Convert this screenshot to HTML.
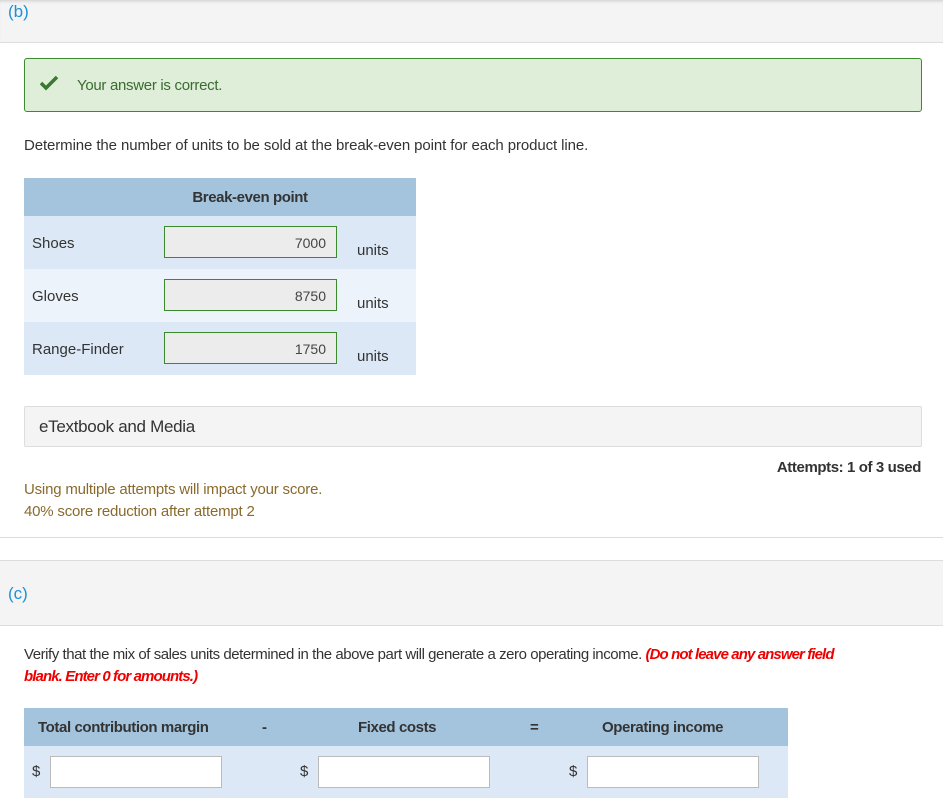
<!DOCTYPE html>
<html><head><style>
body{margin:0;width:943px;height:808px;overflow:hidden;background:#fff;font-family:"Liberation Sans",sans-serif;color:#333;font-size:15px;position:relative}
.a{position:absolute}
.inp{position:absolute;border:1px solid #3c8a2e;background:#ececec;height:32px;box-sizing:border-box;text-align:right;padding:8px 10px 0 0;font-size:14px;color:#444}
.inw{position:absolute;border:1px solid #bbb;background:#fff;height:32px;box-sizing:border-box;top:756px}
</style></head><body>
<div class="a" style="left:0;top:0;width:943px;height:42px;background:#f4f4f4;border-bottom:1px solid #ddd;box-shadow:inset 0 3px 3px -2px #ccc"></div>
<div class="a" style="left:8px;top:2px;color:#1e90d8;font-size:17px">(b)</div>
<div class="a" style="left:24px;top:58px;width:896px;height:52px;background:#dfeed9;border:1px solid #3c8a2e;border-radius:3px"></div>
<svg class="a" style="left:39px;top:75px" width="20" height="16" viewBox="0 0 20 16"><path d="M2 8 L7 13 L18 2" stroke="#3a7a30" stroke-width="3.5" fill="none"/></svg>
<div class="a" style="left:77px;top:77px;color:#3a6b30;font-size:15px;letter-spacing:-0.3px">Your answer is correct.</div>
<div class="a" style="left:24px;top:137px;font-size:15px;letter-spacing:-0.1px">Determine the number of units to be sold at the break-even point for each product line.</div>
<div class="a" style="left:24px;top:178px;width:392px;height:38px;background:#a4c4de"></div>
<div class="a" style="left:24px;top:189px;width:452px;text-align:center;font-weight:bold;font-size:15px;letter-spacing:-0.4px;color:#333">Break-even point</div>
<div class="a" style="left:24px;top:216px;width:392px;height:53px;background:#dce8f6"></div>
<div class="a" style="left:24px;top:269px;width:392px;height:53px;background:#edf3fb"></div>
<div class="a" style="left:24px;top:322px;width:392px;height:53px;background:#dce8f6"></div>
<div class="a" style="left:32px;top:235px">Shoes</div>
<div class="a" style="left:32px;top:288px">Gloves</div>
<div class="a" style="left:32px;top:341px">Range-Finder</div>
<div class="inp" style="left:164px;top:226px;width:173px">7000</div>
<div class="inp" style="left:164px;top:279px;width:173px">8750</div>
<div class="inp" style="left:164px;top:332px;width:173px">1750</div>
<div class="a" style="left:357px;top:242px">units</div>
<div class="a" style="left:357px;top:295px">units</div>
<div class="a" style="left:357px;top:348px">units</div>
<div class="a" style="left:24px;top:406px;width:896px;height:39px;background:#f4f4f4;border:1px solid #ddd;border-radius:2px"></div>
<div class="a" style="left:39px;top:417px;font-size:17px;letter-spacing:-0.3px">eTextbook and Media</div>
<div class="a" style="right:22px;top:459px;font-weight:bold;font-size:15px;letter-spacing:-0.4px">Attempts: 1 of 3 used</div>
<div class="a" style="left:24px;top:481px;color:#8a6a2c;letter-spacing:-0.2px">Using multiple attempts will impact your score.</div>
<div class="a" style="left:24px;top:503px;color:#8a6a2c;letter-spacing:-0.2px">40% score reduction after attempt 2</div>
<div class="a" style="left:0;top:537px;width:943px;height:1px;background:#ddd"></div>
<div class="a" style="left:0;top:560px;width:943px;height:64px;background:#f4f4f4;border-top:1px solid #ddd;border-bottom:1px solid #ddd"></div>
<div class="a" style="left:8px;top:584px;color:#1e90d8;font-size:17px">(c)</div>
<div class="a" style="left:24px;top:644px;font-size:15px;letter-spacing:-0.45px;width:910px;line-height:22px">Verify that the mix of sales units determined in the above part will generate a zero operating income. <i style="color:#e00;font-weight:bold;letter-spacing:-0.9px">(Do not leave any answer field<br>blank. Enter 0 for amounts.)</i></div>
<div class="a" style="left:24px;top:708px;width:764px;height:38px;background:#a4c4de"></div>
<div class="a" style="left:24px;top:746px;width:764px;height:52px;background:#dce8f6"></div>
<div class="a" style="left:38px;top:719px;font-weight:bold;letter-spacing:-0.4px">Total contribution margin</div>
<div class="a" style="left:262px;top:719px;font-weight:bold">-</div>
<div class="a" style="left:358px;top:719px;font-weight:bold;letter-spacing:-0.4px">Fixed costs</div>
<div class="a" style="left:530px;top:719px;font-weight:bold">=</div>
<div class="a" style="left:602px;top:719px;font-weight:bold;letter-spacing:-0.4px">Operating income</div>
<div class="a" style="left:32px;top:763px">$</div>
<div class="a" style="left:300px;top:763px">$</div>
<div class="a" style="left:569px;top:763px">$</div>
<div class="inw" style="left:50px;width:172px"></div>
<div class="inw" style="left:318px;width:172px"></div>
<div class="inw" style="left:587px;width:172px"></div>
</body></html>
